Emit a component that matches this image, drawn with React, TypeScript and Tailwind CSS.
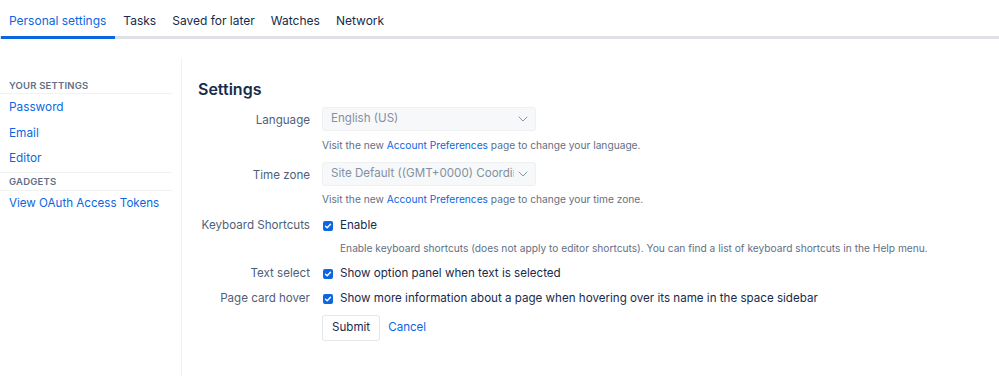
import React from 'react';

const tabs = ['Personal settings', 'Tasks', 'Saved for later', 'Watches', 'Network'];

function Check() {
  return (
    <span className="w-[10px] h-[10px] rounded-[2px] bg-[#0c66e4] flex items-center justify-center shrink-0">
      <svg width="8" height="8" viewBox="0 0 8 8" fill="none">
        <path d="M1.5 4.2L3.2 5.8L6.5 2.2" stroke="white" strokeWidth="1.4" strokeLinecap="round" strokeLinejoin="round" />
      </svg>
    </span>
  );
}

function Chevron() {
  return (
    <svg width="10" height="6" viewBox="0 0 10 6" fill="none">
      <path d="M1 1L5 5L9 1" stroke="#8993a4" strokeWidth="1" strokeLinecap="round" strokeLinejoin="round" />
    </svg>
  );
}

function Select({ value }: { value: string }) {
  return (
    <div className="w-[214px] h-[24px] rounded-[3px] bg-[#f7f8f9] border border-[#eef0f2] flex items-center pl-[8px] pr-[7px] gap-1">
      <span className="flex-1 min-w-0 overflow-hidden whitespace-nowrap text-[11.6px] text-[#8590a2]">{value}</span>
      <Chevron />
    </div>
  );
}

function Help({ children }: { children: React.ReactNode }) {
  return <div className="text-[10.2px] text-[#626f86] leading-[14px] whitespace-nowrap">{children}</div>;
}

function Label({ children, className = '' }: { children: React.ReactNode; className?: string }) {
  return (
    <div className={`flex items-center justify-end whitespace-nowrap text-[11.6px] text-[#505f79] ${className}`}>
      {children}
    </div>
  );
}

export default function App() {
  return (
    <div className="w-[999px] h-[376px] bg-white text-[#172b4d] overflow-hidden" style={{ fontFamily: 'Inter, "Liberation Sans", sans-serif' }}>
      {/* Tabs */}
      <div className="flex border-b-[3px] border-[#dfe1e6] h-[39px] px-px">
        {tabs.map((t, i) => (
          <div
            key={t}
            className={`px-[8px] pt-[5px] flex items-center text-[12px] -mb-[3px] border-b-[3px] ${
              i === 0 ? 'text-[#0c66e4] border-[#0c66e4] pr-[9px]' : 'text-[#172b4d] border-transparent'
            }`}
          >
            {t}
          </div>
        ))}
      </div>

      <div className="flex h-[337px]">
        {/* Sidebar */}
        <div className="w-[182px] shrink-0 pt-[19px]">
          <div className="h-full border-r border-[#f1f2f4] pr-[9px] pt-[20px]">
            <div className="pl-[9px] text-[9.5px] font-semibold tracking-[0.02em] text-[#626f86] h-[16px] leading-[16px] border-b border-[#f1f2f4]">YOUR SETTINGS</div>
            <div className="pl-[9px] text-[11.8px] text-[#0c66e4] leading-[25.5px] pt-px">
              <div>Password</div>
              <div>Email</div>
              <div>Editor</div>
            </div>
            <div className="pl-[9px] text-[9.5px] font-semibold tracking-[0.02em] text-[#626f86] h-[19px] leading-[17px] border-y border-[#f1f2f4]">GADGETS</div>
            <div className="pl-[9px] text-[11.6px] text-[#0c66e4] leading-[24px]">View OAuth Access Tokens</div>
          </div>
        </div>

        {/* Main */}
        <div className="flex-1 pl-[16px] pt-[39px]">
          <h1 className="text-[16px] font-semibold leading-[22px] text-[#172b4d]">Settings</h1>

          <div className="mt-[7px] grid grid-cols-[112px_1fr] gap-x-[12px]">
            <Label className="h-[24px] pt-[3px]">Language</Label>
            <div>
              <Select value="English (US)" />
              <div className="mt-[7px]">
                <Help>
                  Visit the new <span className="text-[#0c66e4]">Account Preferences</span> page to change your language.
                </Help>
              </div>
            </div>

            <Label className="mt-[10px] h-[24px] pt-[3px]">Time zone</Label>
            <div className="mt-[10px]">
              <Select value="Site Default ((GMT+0000) Coordinated Universal Time)" />
              <div className="mt-[6px]">
                <Help>
                  Visit the new <span className="text-[#0c66e4]">Account Preferences</span> page to change your time zone.
                </Help>
              </div>
            </div>

            <Label className="mt-[13px] h-[14px]">Keyboard Shortcuts</Label>
            <div className="mt-[13px]">
              <div className="h-[14px] flex items-center gap-[7px] pl-px">
                <Check />
                <span className="text-[11.6px]">Enable</span>
              </div>
              <div className="mt-[8px] pl-[18px]">
                <Help>Enable keyboard shortcuts (does not apply to editor shortcuts). You can find a list of keyboard shortcuts in the Help menu.</Help>
              </div>
            </div>

            <Label className="mt-[12px] h-[14px]">Text select</Label>
            <div className="mt-[12px] h-[14px] flex items-center gap-[7px] pl-px">
              <Check />
              <span className="text-[11.6px]">Show option panel when text is selected</span>
            </div>

            <Label className="mt-[11px] h-[14px]">Page card hover</Label>
            <div className="mt-[11px] h-[14px] flex items-center gap-[7px] pl-px">
              <Check />
              <span className="text-[11.6px]">Show more information about a page when hovering over its name in the space sidebar</span>
            </div>

            <div />
            <div className="mt-[9px] flex items-center gap-[8px]">
              <button className="h-[26px] px-[9px] rounded-[3px] border border-[#e4e6ea] bg-white text-[11.6px] text-[#172b4d]">Submit</button>
              <span className="text-[11.6px] text-[#0c66e4]">Cancel</span>
            </div>
          </div>
        </div>
      </div>
    </div>
  );
}
